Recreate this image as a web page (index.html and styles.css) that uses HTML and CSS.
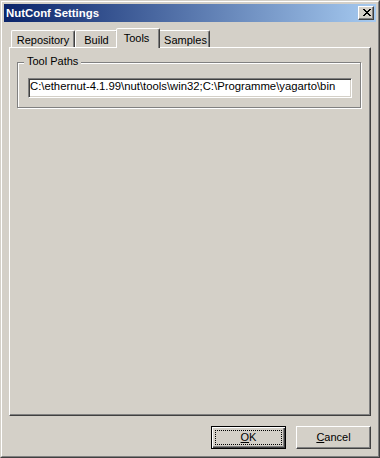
FILE: index.html
```html
<!DOCTYPE html>
<html>
<head>
<meta charset="utf-8">
<title>NutConf Settings</title>
<link rel="stylesheet" href="styles.css">
</head>
<body>
<div class="window">
  <div class="frame">
    <div class="titlebar">
      <span class="title">NutConf Settings</span>
      <div class="close">
        <svg class="close-x" width="8" height="7" viewBox="0 0 8 7" shape-rendering="crispEdges">
          <path d="M0 0h2v1h-2zM6 0h2v1h-2zM1 1h2v1h-2zM5 1h2v1h-2zM2 2h4v1h-4zM3 3h2v1h-2zM2 4h4v1h-4zM1 5h2v1h-2zM5 5h2v1h-2zM0 6h2v1h-2zM6 6h2v1h-2z" fill="#000"/>
        </svg>
      </div>
    </div>
    <div class="body">
      <div class="tabs">
        <div class="tab tab-repo">Repository</div>
        <div class="tab tab-build">Build</div>
        <div class="tab tab-tools active">Tools</div>
        <div class="tab tab-samples">Samples</div>
      </div>
      <div class="panel">
        <div class="group">
          <span class="group-label">Tool Paths</span>
          <div class="textbox">C:\ethernut-4.1.99\nut\tools\win32;C:\Programme\yagarto\bin</div>
        </div>
      </div>
      <div class="buttons">
        <div class="btn default"><span class="focus"><u>O</u>K</span></div>
        <div class="btn"><u>C</u>ancel</div>
      </div>
    </div>
  </div>
</div>
</body>
</html>
```

FILE: styles.css
```css
html, body {
  margin: 0;
  padding: 0;
  background: #d4d0c8;
}

.window {
  width: 380px;
  height: 458px;
  box-sizing: border-box;
  border: 1px solid;
  border-color: #d4d0c8 #404040 #404040 #d4d0c8;
  background: #d4d0c8;
  font-family: "Liberation Sans", Arial, sans-serif;
  font-size: 11px;
  color: #000;
}

.frame {
  height: 100%;
  box-sizing: border-box;
  border: 1px solid;
  border-color: #ffffff #808080 #808080 #ffffff;
  padding: 2px;
  display: flex;
  flex-direction: column;
}

.titlebar {
  flex: none;
  height: 18px;
  box-sizing: border-box;
  padding: 0 2px 0 2px;
  background: linear-gradient(to right, #0a246a, #a6caf0);
  display: flex;
  align-items: center;
  justify-content: space-between;
}

.title {
  color: #fff;
  font-weight: bold;
  font-size: 11.4px;
  line-height: 13px;
}

.close {
  width: 16px;
  height: 14px;
  box-sizing: border-box;
  border: 1px solid;
  border-color: #ffffff #404040 #404040 #ffffff;
  box-shadow: inset -1px -1px 0 #808080;
  background: #d4d0c8;
  padding: 2px 0 0 4px;
}

.close-x {
  display: block;
}

.body {
  flex: 1;
  padding: 6px 5px 0 5px;
  display: flex;
  flex-direction: column;
}

.tabs {
  flex: none;
  height: 19px;
  padding-left: 2px;
  display: flex;
  align-items: flex-end;
  position: relative;
  z-index: 1;
}

.tab {
  height: 17px;
  box-sizing: border-box;
  border: 1px solid;
  border-bottom: 0;
  border-color: #ffffff #404040 transparent #ffffff;
  border-radius: 2px 2px 0 0;
  box-shadow: inset -1px 0 0 #808080;
  padding-top: 3px;
  line-height: 13px;
  text-align: center;
  white-space: nowrap;
}

.tab-repo { width: 64px; }
.tab-build { width: 43px; }
.tab-tools { width: 40px; }
.tab-samples { width: 52px; padding-left: 3px; box-sizing: border-box; }

.tab.active {
  width: 44px;
  height: 20px;
  margin: 0 -2px -1px -2px;
  padding-right: 3px;
  background: #d4d0c8;
  position: relative;
  z-index: 2;
}

.panel {
  flex: none;
  height: 369px;
  box-sizing: border-box;
  border: 1px solid;
  border-color: #ffffff #404040 #404040 #ffffff;
  box-shadow: inset -1px -1px 0 #808080;
  padding: 14px 9px 0 7px;
}

.group {
  position: relative;
  height: 46px;
  box-sizing: border-box;
  border: 1px solid #808080;
  box-shadow: inset 1px 1px 0 #ffffff, 1px 1px 0 #ffffff;
  padding: 15px 8px 0 10px;
}

.group-label {
  position: absolute;
  top: -8px;
  left: 6px;
  padding: 0 3px;
  line-height: 13px;
  background: #d4d0c8;
}

.textbox {
  height: 20px;
  box-sizing: border-box;
  border: 1px solid;
  border-color: #808080 #ffffff #ffffff #808080;
  box-shadow: inset 1px 1px 0 #404040, inset -1px -1px 0 #d4d0c8;
  background: #fff;
  padding: 1px 0 0 1px;
  font-size: 11.3px;
  line-height: 13px;
  white-space: nowrap;
  overflow: hidden;
}

.buttons {
  flex: none;
  margin-top: 10px;
  display: flex;
  justify-content: flex-end;
  gap: 10px;
}

.btn {
  width: 75px;
  height: 23px;
  box-sizing: border-box;
  border: 1px solid;
  border-color: #ffffff #404040 #404040 #ffffff;
  box-shadow: inset -1px -1px 0 #808080;
  display: flex;
  align-items: center;
  justify-content: center;
  line-height: 13px;
}

.btn.default {
  border-color: #000;
  box-shadow: inset 1px 1px 0 #ffffff, inset -1px -1px 0 #404040, inset -2px -2px 0 #808080;
  padding: 3px;
  align-items: stretch;
}

.focus {
  flex: 1;
  border: 1px dotted #000;
  display: flex;
  align-items: center;
  justify-content: center;
}

u {
  text-decoration: underline;
}
```
